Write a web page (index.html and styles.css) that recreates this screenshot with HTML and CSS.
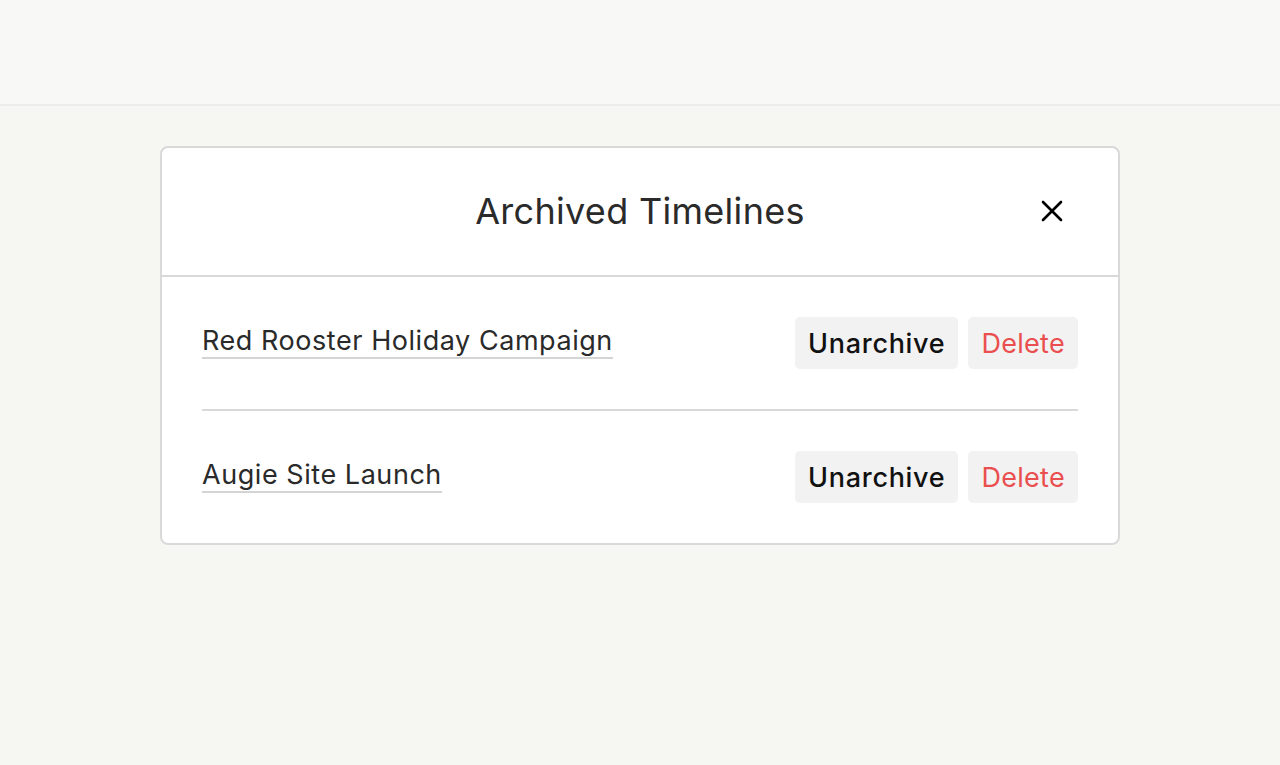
FILE: index.html
```html
<!DOCTYPE html>
<html>
<head>
<meta charset="utf-8">
<link rel="stylesheet" href="styles.css">
</head>
<body>
<header class="topbar"></header>
<main class="page">
  <section class="modal">
    <div class="modal-head">
      <h1 class="modal-title">Archived Timelines</h1>
      <button class="close" aria-label="Close">
        <svg width="22" height="22" viewBox="0 0 22 22"><path d="M2 2L20 20M20 2L2 20" stroke="#000" stroke-width="2.6" stroke-linecap="round"/></svg>
      </button>
    </div>
    <ul class="list">
      <li class="item">
        <a class="item-link" href="#">Red Rooster Holiday Campaign</a>
        <div class="actions">
          <button class="btn">Unarchive</button>
          <button class="btn btn-danger">Delete</button>
        </div>
      </li>
      <li class="item">
        <a class="item-link" href="#">Augie Site Launch</a>
        <div class="actions">
          <button class="btn">Unarchive</button>
          <button class="btn btn-danger">Delete</button>
        </div>
      </li>
    </ul>
  </section>
</main>
</body>
</html>
```
FILE: styles.css
```css
* { box-sizing: border-box; }
html, body { margin: 0; padding: 0; }
body {
  background: #f6f6f2;
  font-family: Inter, "Noto Sans", sans-serif;
  color: #2a2a2a;
  height: 765px;
}
.topbar {
  height: 106px;
  background: #f8f8f6;
  border-bottom: 2px solid #ececea;
}
.page {
  padding-top: 40px;
  display: flex;
  justify-content: center;
}
.modal {
  width: 960px;
  background: #fff;
  border: 2px solid #d9d9d9;
  border-radius: 8px;
}
.modal-head {
  height: 129px;
  border-bottom: 2px solid #d9d9d9;
  display: flex;
  align-items: center;
  justify-content: center;
  position: relative;
}
.modal-title {
  margin: 0;
  font-size: 36px;
  font-weight: 400;
  color: #2a2a2a;
  letter-spacing: 0.3px;
  margin-top: -2px;
}
.close {
  position: absolute;
  right: 55px;
  top: 52px;
  background: none;
  border: 0;
  padding: 0;
  width: 22px;
  height: 22px;
  cursor: pointer;
  display: flex;
}
.list {
  list-style: none;
  margin: 0;
  padding: 0 40px;
}
.item {
  height: 132px;
  display: flex;
  align-items: center;
  justify-content: space-between;
}
.item + .item { border-top: 2px solid #d9d9d9; height: 134px; }
.item-link {
  font-size: 27px;
  color: #2a2a2a;
  text-decoration: none;
  border-bottom: 2px solid #d4d4d4;
  line-height: 32px;
  letter-spacing: 0.55px;
  margin-top: -2px;
}
.actions { display: flex; gap: 10px; }
.btn {
  font-family: Inter, "Noto Sans", sans-serif;
  font-size: 27px;
  font-weight: 500;
  letter-spacing: 0.7px;
  color: #111;
  background: #f2f2f2;
  border: 0;
  border-radius: 5px;
  height: 52px;
  padding: 0 13px;
  cursor: pointer;
}
.btn-danger { color: #ea4f4f; font-weight: 400; letter-spacing: 0.3px; }
```
